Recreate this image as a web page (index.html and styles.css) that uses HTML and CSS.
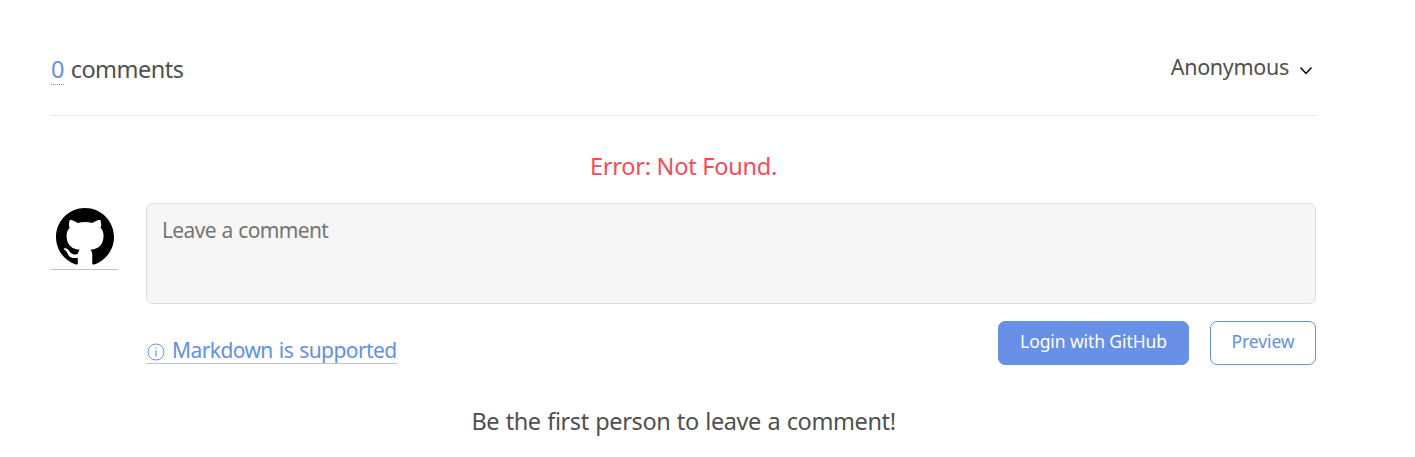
FILE: index.html
```html
<!DOCTYPE html>
<html lang="en">
<head>
<meta charset="utf-8">
<title>Comments</title>
<link rel="stylesheet" href="styles.css">
</head>
<body>
<main class="comments">
  <header class="meta">
    <div class="counts"><a class="count">0</a> <span class="count-label">comments</span></div>
    <div class="user"><span class="user-name">Anonymous</span><svg class="arrow" width="14" height="10" viewBox="0 0 14 10"><path d="M1.5 1.5 7 7.5 12.5 1.5" fill="none" stroke="#000" stroke-width="1.5"/></svg></div>
  </header>
  <p class="error"><span class="error-text">Error: Not Found.</span></p>
  <section class="editor">
    <a class="avatar"><svg width="58" height="58" viewBox="0 0 16 16"><path d="M8 0C3.58 0 0 3.58 0 8c0 3.54 2.29 6.53 5.47 7.59.4.07.55-.17.55-.38 0-.19-.01-.82-.01-1.49-2.01.37-2.53-.49-2.69-.94-.09-.23-.48-.94-.82-1.13-.28-.15-.68-.52-.01-.53.63-.01 1.08.58 1.23.82.72 1.21 1.87.87 2.33.66.07-.52.28-.87.51-1.07-1.78-.2-3.64-.89-3.64-3.95 0-.87.31-1.59.82-2.15-.08-.2-.36-1.02.08-2.12 0 0 .67-.21 2.2.82.64-.18 1.32-.27 2-.27s1.36.09 2 .27c1.53-1.04 2.2-.82 2.2-.82.44 1.1.16 1.92.08 2.12.51.56.82 1.27.82 2.15 0 3.07-1.87 3.75-3.65 3.95.29.25.54.73.54 1.48 0 1.07-.01 1.93-.01 2.2 0 .21.15.46.55.38A8.01 8.01 0 0 0 16 8c0-4.42-3.58-8-8-8z"/></svg></a>
    <div class="form">
      <textarea class="field" placeholder="Leave a comment"></textarea>
      <div class="controls">
        <a class="tip"><svg class="info" width="18" height="18" viewBox="0 0 18 18"><circle cx="9" cy="9" r="8" fill="none" stroke="currentColor"/><path d="M9 7.3V13.5M9 4.5V5.8" stroke="currentColor" stroke-width="1.2"/></svg><span class="tip-text">Markdown is supported</span></a>
        <div class="buttons">
          <button class="btn login"><span class="login-text">Login with GitHub</span></button>
          <button class="btn preview"><span class="preview-text">Preview</span></button>
        </div>
      </div>
    </div>
  </section>
  <p class="empty"><span class="empty-text">Be the first person to leave a comment!</span></p>
</main>
</body>
</html>
```

FILE: styles.css
```css
* { box-sizing: border-box; }
body {
  margin: 0;
  background: #fff;
  color: #4f4f4f;
  font-family: "Noto Sans", "Open Sans", sans-serif;
}
.comments { width: 1265px; margin-left: 51px; padding-top: 44px; }
.meta {
  display: flex;
  justify-content: space-between;
  height: 72px;
  border-bottom: 1px solid #e9e9e9;
}
.counts {
  padding-top: 5px;
  font-size: 23.5px;
  line-height: 40px;
  letter-spacing: -0.5px;
  word-spacing: 1px;
}
.count {
  display: inline-block;
  width: 13px;
  height: 36px;
  color: #6190e8;
  border-bottom: 1px dotted #6190e8;
}
.user { display: flex; font-size: 21.5px; line-height: 45px; letter-spacing: -0.3px; }
.arrow { margin: 22px 3px 0 10px; }
p { margin: 0; text-align: center; }
.error {
  padding-top: 30px;
  color: #f44b5c;
  font-size: 23.5px;
  line-height: 40px;
  letter-spacing: -0.25px;
}
.editor { display: flex; gap: 28px; padding-top: 17px; }
.avatar {
  width: 67px;
  height: 67px;
  padding: 5px 4px 0 5px;
  border-bottom: 1px solid #c3c3c3;
}
.avatar svg { display: block; }
.form { flex: 1; }
.field {
  display: block;
  width: 100%;
  height: 101px;
  padding: 11px 15px;
  border: 1px solid #dcdcdc;
  border-radius: 7px;
  background: #f6f6f6;
  font: 21px/30px "Noto Sans", sans-serif;
  letter-spacing: -0.65px;
  word-spacing: 0.8px;
  resize: none;
}
.field::placeholder { color: #757575; }
.controls { display: flex; justify-content: space-between; padding-top: 17px; }
.tip {
  display: flex;
  width: 251px;
  height: 29px;
  margin-top: 14px;
  border-bottom: 1px solid #c3c3c3;
  color: #6190e8;
  font-size: 21px;
  line-height: 30px;
  letter-spacing: -0.58px;
  word-spacing: 1.2px;
  white-space: nowrap;
}
.info { margin: 8px 7px 0 1px; flex: none; }
.buttons { display: flex; gap: 21px; }
.btn {
  height: 44px;
  padding: 0 0 4px;
  border: 1px solid #6190e8;
  border-radius: 7px;
  font: 17.5px/24px "Noto Sans", sans-serif;
  letter-spacing: -0.1px;
  white-space: nowrap;
}
.login { width: 191px; background: #6790e6; border-color: #6790e6; color: #fff; }
.preview { width: 106px; background: #fff; color: #6190e8; }
.empty {
  padding-top: 36px;
  font-size: 23.5px;
  line-height: 40px;
  letter-spacing: -0.4px;
  word-spacing: 0.8px;
}
```
